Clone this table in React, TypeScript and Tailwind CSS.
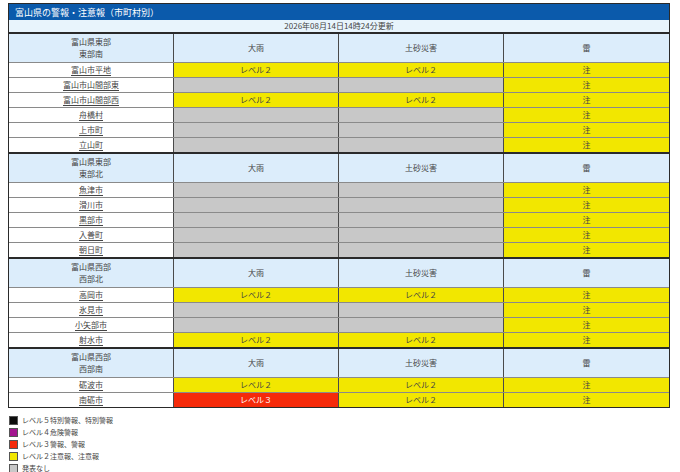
type Level = 'l2' | 'l3' | 'none' | 'chu';

type Area = { name: string; rain: Level; land: Level; thunder: Level };

type Section = { pref: string; region: string; areas: Area[] };

const sections: Section[] = [
  {
    pref: '富山県東部',
    region: '東部南',
    areas: [
      { name: '富山市平地', rain: 'l2', land: 'l2', thunder: 'chu' },
      { name: '富山市山間部東', rain: 'none', land: 'none', thunder: 'chu' },
      { name: '富山市山間部西', rain: 'l2', land: 'l2', thunder: 'chu' },
      { name: '舟橋村', rain: 'none', land: 'none', thunder: 'chu' },
      { name: '上市町', rain: 'none', land: 'none', thunder: 'chu' },
      { name: '立山町', rain: 'none', land: 'none', thunder: 'chu' },
    ],
  },
  {
    pref: '富山県東部',
    region: '東部北',
    areas: [
      { name: '魚津市', rain: 'none', land: 'none', thunder: 'chu' },
      { name: '滑川市', rain: 'none', land: 'none', thunder: 'chu' },
      { name: '黒部市', rain: 'none', land: 'none', thunder: 'chu' },
      { name: '入善町', rain: 'none', land: 'none', thunder: 'chu' },
      { name: '朝日町', rain: 'none', land: 'none', thunder: 'chu' },
    ],
  },
  {
    pref: '富山県西部',
    region: '西部北',
    areas: [
      { name: '高岡市', rain: 'l2', land: 'l2', thunder: 'chu' },
      { name: '氷見市', rain: 'none', land: 'none', thunder: 'chu' },
      { name: '小矢部市', rain: 'none', land: 'none', thunder: 'chu' },
      { name: '射水市', rain: 'l2', land: 'l2', thunder: 'chu' },
    ],
  },
  {
    pref: '富山県西部',
    region: '西部南',
    areas: [
      { name: '砺波市', rain: 'l2', land: 'l2', thunder: 'chu' },
      { name: '南砺市', rain: 'l3', land: 'l2', thunder: 'chu' },
    ],
  },
];

const legend = [
  { color: 'bg-[#0c0c0c]', label: 'レベル５特別警報、特別警報' },
  { color: 'bg-[#a3158f]', label: 'レベル４危険警報' },
  { color: 'bg-[#f52a0a]', label: 'レベル３警報、警報' },
  { color: 'bg-[#f2e700]', label: 'レベル２注意報、注意報' },
  { color: 'bg-[#c8c8c8]', label: '発表なし' },
];

function Cell({ level, last }: { level: Level; last?: boolean }) {
  const border = last ? '' : 'border-r border-[#4a4a4a]';
  if (level === 'l2') {
    return <div className={`flex items-center justify-center bg-[#f2e700] text-[#444] ${border}`}>レベル２</div>;
  }
  if (level === 'l3') {
    return <div className={`flex items-center justify-center bg-[#f52a0a] text-white ${border}`}>レベル３</div>;
  }
  if (level === 'chu') {
    return <div className={`flex items-center justify-center bg-[#f2e700] text-[#444] ${border}`}>注</div>;
  }
  return <div className={`bg-[#c8c8c8] ${border}`} />;
}

export default function App() {
  return (
    <div
      className="h-[472px] w-[680px] overflow-hidden bg-white pt-[3px] pl-[8px] text-[8px] leading-none text-[#444]"
      style={{ fontFamily: '"Noto Sans CJK JP", "Noto Sans", sans-serif' }}
    >
      {/* Table */}
      <div className="w-[662px] border border-[#2a2a2a]">
        <div className="flex h-[16px] items-center bg-[#0b5aab] px-[6px] text-[9px] text-white">
          富山県の警報・注意報（市町村別）
        </div>
        <div className="flex h-[14px] items-center justify-center border-b-2 border-[#2a2a2a] bg-[#e8f4fc] text-[8px]">
          2026年08月14日14時24分更新
        </div>

        {sections.map((section, si) => (
          <div key={si} className={si > 0 ? 'border-t-2 border-[#2a2a2a]' : ''}>
            <div className="grid h-[28px] grid-cols-4 bg-[#dcedfb]">
              <div className="flex flex-col items-center justify-center gap-[4px] border-r border-[#4a4a4a]">
                <span>{section.pref}</span>
                <span>{section.region}</span>
              </div>
              <div className="flex items-center justify-center border-r border-[#4a4a4a]">大雨</div>
              <div className="flex items-center justify-center border-r border-[#4a4a4a]">土砂災害</div>
              <div className="flex items-center justify-center">雷</div>
            </div>
            {section.areas.map((area) => (
              <div key={area.name} className="grid h-[15px] grid-cols-4 border-t border-[#8a8a8a]">
                <div className="flex items-center justify-center border-r border-[#4a4a4a] bg-white">
                  <span className="underline underline-offset-2">{area.name}</span>
                </div>
                <Cell level={area.rain} />
                <Cell level={area.land} />
                <Cell level={area.thunder} last />
              </div>
            ))}
          </div>
        ))}
      </div>

      {/* Legend */}
      <div className="mt-[8px] flex flex-col gap-[3px] pl-[1px] text-[7px] text-[#444]">
        {legend.map((item) => (
          <div key={item.label} className="flex h-[9px] items-center gap-[4px]">
            <span className={`h-[9px] w-[9px] border border-[#555] ${item.color}`} />
            <span>{item.label}</span>
          </div>
        ))}
      </div>
    </div>
  );
}
